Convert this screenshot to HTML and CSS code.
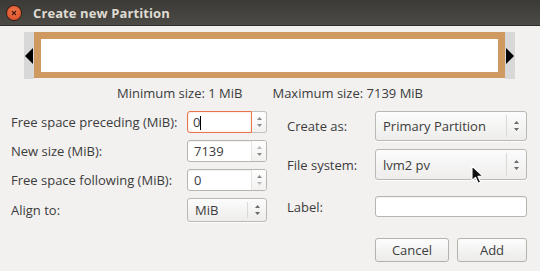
FILE: index.html
```html
<!DOCTYPE html>
<html>
<head>
<meta charset="utf-8">
<link rel="stylesheet" href="styles.css">
</head>
<body>
<div class="window">
  <div class="titlebar">
    <span class="close"><svg width="6" height="6" viewBox="0 0 6 6"><path d="M1 1L5 5M5 1L1 5" stroke="#4a1a0a" stroke-width="1.3"/></svg></span>
    <span class="title">Create new Partition</span>
  </div>
  <div class="content">
    <div class="partbar">
      <div class="strip left"><span class="tri-l"></span></div>
      <div class="part"></div>
      <div class="strip right"><span class="tri-r"></span></div>
    </div>
    <div class="sizes">
      <span>Minimum size: 1 MiB</span>
      <span>Maximum size: 7139 MiB</span>
    </div>
    <div class="form">
      <div class="col-left">
        <div class="row"><label>Free space preceding (MiB):</label>
          <div class="spin focus"><span class="entry">0<i class="caret"></i></span><span class="arrows"><svg width="5" height="12" viewBox="0 0 5 12"><path d="M0 4L2.5 1L5 4Z M0 8L2.5 11L5 8Z" fill="#8a8a8a"/></svg></span></div></div>
        <div class="row"><label>New size (MiB):</label>
          <div class="spin"><span class="entry">7139</span><span class="arrows"><svg width="5" height="12" viewBox="0 0 5 12"><path d="M0 4L2.5 1L5 4Z" fill="#b8b8b8"/><path d="M0 8L2.5 11L5 8Z" fill="#8a8a8a"/></svg></span></div></div>
        <div class="row"><label>Free space following (MiB):</label>
          <div class="spin"><span class="entry">0</span><span class="arrows"><svg width="5" height="12" viewBox="0 0 5 12"><path d="M0 4L2.5 1L5 4Z" fill="#8a8a8a"/><path d="M0 8L2.5 11L5 8Z" fill="#b8b8b8"/></svg></span></div></div>
        <div class="row last"><label>Align to:</label>
          <div class="combo small"><span class="val">MiB</span><span class="sep"></span><span class="carrows"><svg width="5" height="12" viewBox="0 0 5 12"><path d="M0 4L2.5 1L5 4Z M0 8L2.5 11L5 8Z" fill="#6a6a6a"/></svg></span></div></div>
      </div>
      <div class="col-right">
        <div class="rrow r1"><label>Create as:</label>
          <div class="combo big"><span class="val">Primary Partition</span><span class="sep"></span><span class="carrows"><svg width="5" height="12" viewBox="0 0 5 12"><path d="M0 4L2.5 1L5 4Z M0 8L2.5 11L5 8Z" fill="#6a6a6a"/></svg></span></div></div>
        <div class="rrow r2"><label>File system:</label>
          <div class="combo big"><span class="val">lvm2 pv</span><span class="sep"></span><span class="carrows"><svg width="5" height="12" viewBox="0 0 5 12"><path d="M0 4L2.5 1L5 4Z M0 8L2.5 11L5 8Z" fill="#6a6a6a"/></svg></span></div></div>
        <div class="rrow r3"><label>Label:</label>
          <div class="textentry"></div></div>
      </div>
    </div>
    <div class="buttons">
      <button class="btn cancel">Cancel</button>
      <button class="btn add">Add</button>
    </div>
  </div>
  <svg class="pointer" width="14" height="20" viewBox="0 0 14 20"><path d="M1 1L1 15.5L4.5 12.3L7.2 18.2L9.6 17.1L7 11.4L11.8 11.2Z" fill="#111" stroke="#fff" stroke-width="1.1" stroke-linejoin="round"/></svg>
</div>
</body>
</html>
```
FILE: styles.css
```css
* { box-sizing: border-box; }
html, body { margin: 0; padding: 0; }
body {
  width: 540px; height: 271px; overflow: hidden;
  background: #f2f1f0;
  font-family: "Open Sans", "DejaVu Sans", sans-serif;
  color: #3c3c3c;
  font-size: 13px;
}
.window { position: relative; width: 540px; height: 271px; background: #f2f1f0; }
.titlebar {
  height: 26px;
  background: linear-gradient(#3b3a36, #4b4a45);
  border-bottom: 1px solid #2e2d2a;
  display: flex; align-items: center;
  padding-left: 7px;
}
.close {
  width: 14px; height: 14px; border-radius: 50%;
  background: radial-gradient(circle at 50% 40%, #f07a4e, #d9461e);
  box-shadow: 0 0 0 1px #3a2018;
  display: flex; align-items: center; justify-content: center;
}
.title {
  margin-left: 12px;
  color: #dfdbd2;
  font-weight: bold;
  font-size: 13px;
  letter-spacing: 0.1px;
}
.content { padding: 6px 0 0 0; }
.partbar {
  margin-left: 24px; width: 491px; height: 47px;
  display: flex;
}
.strip {
  width: 10px; background: #d8d8d8;
  display: flex; align-items: center;
}
.strip.left { justify-content: flex-start; }
.strip.right { justify-content: flex-end; }
.tri-l {
  width: 0; height: 0; margin-left: 1px;
  border-top: 8px solid transparent; border-bottom: 8px solid transparent;
  border-right: 8px solid #000;
}
.tri-r {
  width: 0; height: 0; margin-right: 1px;
  border-top: 8px solid transparent; border-bottom: 8px solid transparent;
  border-left: 8px solid #000;
}
.part {
  flex: 1; height: 46px;
  border: 7px solid #cf9a62; border-bottom-width: 6px;
  background: #fff;
}
.sizes {
  display: flex; justify-content: center; gap: 30px;
  margin-top: 5px; height: 18px; line-height: 18px;
}
.form {
  display: flex; margin-top: 9px;
}
.col-left { width: 276px; padding-left: 11px; }
.col-right { padding-left: 11px; }
.row {
  display: flex; align-items: center; height: 22px; margin-bottom: 7px;
}
.row label { width: 176px; }
.row.last { height: 24px; margin-bottom: 0; }
.spin {
  width: 80px; height: 22px; display: flex;
  border: 1px solid #b8b5b0; border-radius: 3px;
  background: #fff;
  box-shadow: inset 0 1px 1px rgba(0,0,0,0.06);
}
.spin .entry {
  flex: 1; padding-left: 6px; line-height: 20px; position: relative;
}
.spin .arrows {
  width: 15px; border-left: 1px solid #e6e4e1;
  display: flex; align-items: center; justify-content: center;
  background: linear-gradient(#ffffff, #f2f1f0);
  border-radius: 0 2px 2px 0;
}
.spin.focus { border: none; background: transparent; box-shadow: none; }
.spin.focus .entry {
  border: 1px solid #e9744a; border-radius: 3px 0 0 3px;
  background: #fff; padding-left: 5px;
  box-shadow: inset 0 0 2px rgba(233,116,74,0.35);
}
.spin.focus .arrows {
  border: 1px solid #c4c1bc; border-left: none; border-radius: 0 3px 3px 0;
}
.caret {
  display: inline-block; width: 1px; height: 14px; background: #000;
  vertical-align: -3px; margin-left: 0px;
}
.combo {
  display: flex; align-items: center;
  border: 1px solid #bbb8b3; border-radius: 3px;
  background: linear-gradient(#fcfcfc, #eeedec);
  box-shadow: 0 1px 0 rgba(255,255,255,0.8);
}
.combo .val { flex: 1; padding-left: 7px; }
.combo .sep { width: 1px; align-self: stretch; margin: 3px 0; background: #dcdad6; }
.combo .carrows { width: 18px; display: flex; justify-content: center; }
.combo.small { width: 80px; height: 24px; }
.combo.big { width: 152px; }
.combo.big .carrows { width: 19px; }
.rrow { display: flex; align-items: center; }
.rrow label { width: 88px; }
.r1 .combo, .r1 { height: 30px; }
.r2 { margin-top: 8px; height: 31px; }
.r2 .combo { height: 31px; }
.r3 { margin-top: 16px; height: 21px; }
.textentry {
  width: 152px; height: 21px; background: #fff;
  border: 1px solid #b8b5b0; border-radius: 3px;
  box-shadow: inset 0 1px 1px rgba(0,0,0,0.06);
}
.buttons {
  display: flex; justify-content: flex-end; gap: 8px;
  padding-right: 13px; margin-top: 16px;
}
.btn {
  height: 24px; font-family: inherit; font-size: 13px; color: #3c3c3c;
  border: 1px solid #b5b2ad; border-radius: 3px;
  background: linear-gradient(#fdfdfd, #ecebea);
  padding: 0;
}
.cancel { width: 74px; }
.add { width: 70px; }
.pointer { position: absolute; left: 471px; top: 165px; }
```
